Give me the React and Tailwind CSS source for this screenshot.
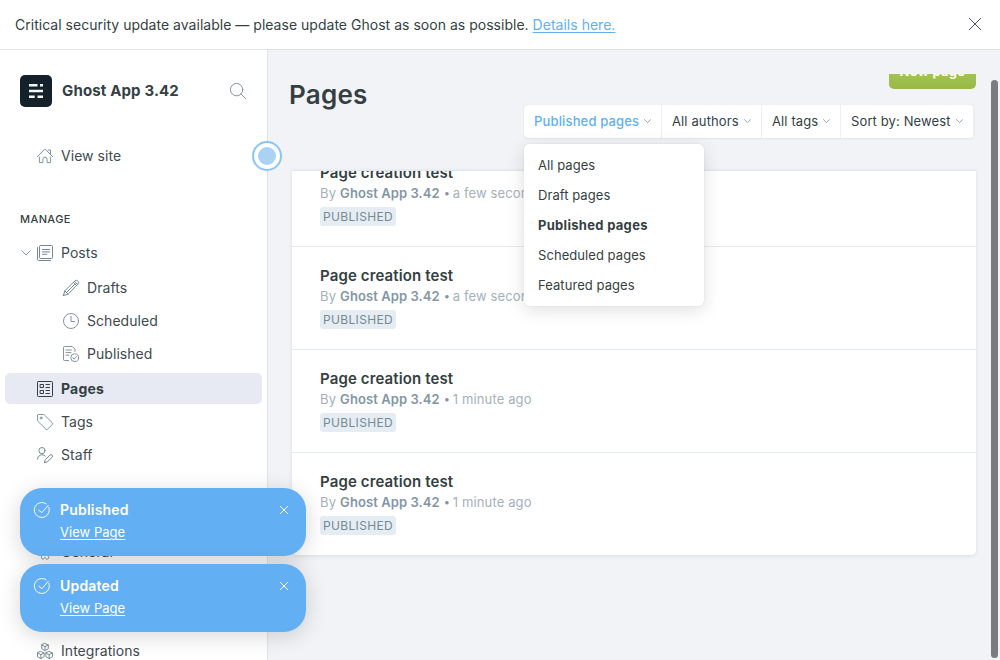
function Icon({ children, className = "", w = 0.9 }) {
  return (
    <svg
      viewBox="0 0 16 16"
      fill="none"
      stroke="currentColor"
      strokeWidth={w}
      strokeLinecap="round"
      strokeLinejoin="round"
      className={`size-4 shrink-0 overflow-visible ${className}`}
    >
      {children}
    </svg>
  );
}

const HomeIcon = () => (
  <Icon>
    <path d="M.4 8.7 7.3 1.6a1 1 0 0 1 1.4 0l6.9 7.1M11.2 2h2.3v4.4M2.4 9v5.6h3.5v-3.4a2.1 2.1 0 0 1 4.2 0v3.4h3.5V9" />
  </Icon>
);

const PostsIcon = () => (
  <Icon w={1}>
    <rect x="2.5" y=".5" width="13" height="13" rx="1" />
    <path d="M.5 2.5v12a1 1 0 0 0 1 1h12M5.5 4.5h7M5.5 6.9h7M5.5 9.3h4.4" />
  </Icon>
);

const PencilIcon = () => (
  <Icon w={1}>
    <path d="M.4 15.6l1.4-4.7L11.6 1.1a2.1 2.1 0 0 1 3.2 0 2.1 2.1 0 0 1 0 3.2L5.1 14.2.4 15.6ZM1.8 10.9l3.3 3.3M10.4 2.3l3.3 3.3M11.4 1.3l3.3 3.3M3.6 12.5l8.3-8.4" />
  </Icon>
);

const ClockIcon = () => (
  <Icon>
    <circle cx="8" cy="8" r="7.5" />
    <path d="M8 3.4V8.5h3.6" />
  </Icon>
);

const PublishedIcon = () => (
  <Icon>
    <path d="M5.6 14.5H1.5a1 1 0 0 1-1-1V1.5a1 1 0 0 1 1-1h7.8l2.6 2.6v2.4M3 4h5.4M3 6.6h5M3 9.2h3" />
    <circle cx="11.7" cy="11.7" r="3.9" />
    <path d="M13.4 10.5l-2.2 2.6-1.4-1.2" />
  </Icon>
);

const PagesIcon = () => (
  <Icon w={1}>
    <rect x=".5" y=".5" width="15" height="15" rx=".8" />
    <path d="M3.5 3.5h3v3h-3zM3.5 9.5h3v3h-3zM9 3.5h3.5M9 6.5h3.5M9 9.5h3.5M9 12.5h3.5" />
  </Icon>
);

const TagIcon = () => (
  <Icon>
    <path d="M.5 1.5v4.9a1.3 1.3 0 0 0 .4.9l8 7.9a1.2 1.2 0 0 0 1.7 0l4.7-4.7a1.2 1.2 0 0 0 0-1.7L7.3.9a1.3 1.3 0 0 0-.9-.4H1.5a1 1 0 0 0-1 1Z" />
    <circle cx="4" cy="4" r="1" />
  </Icon>
);

const StaffIcon = () => (
  <Icon w={1}>
    <circle cx="5" cy="3.6" r="3.1" />
    <path d="M.4 12.2A4.7 4.7 0 0 1 8.3 9M7.5 15.6l.7-2.8 4.8-4.7a1.45 1.45 0 0 1 2.1 2.1l-4.8 4.7-2.8.7Z" />
  </Icon>
);

const GearIcon = () => (
  <Icon>
    <circle cx="8" cy="8" r="2.6" />
    <path d="M6.6 1.6a1.5 1.5 0 0 1 2.8 0l.3 1a1.4 1.4 0 0 0 1.8.8l1-.3a1.5 1.5 0 0 1 1.5 2.2l-.5 1a1.4 1.4 0 0 0 .6 1.9l.8.4a1.4 1.4 0 0 1-.8 2.6l-1-.1a1.4 1.4 0 0 0-1.5 1.5l.1 1a1.5 1.5 0 0 1-2.7 1l-1-1.2-1 1.2a1.5 1.5 0 0 1-2.6-1l.1-1A1.4 1.4 0 0 0 3 11.1l-1 .1a1.4 1.4 0 0 1-.8-2.6L2 8.2a1.4 1.4 0 0 0 .6-1.9l-.5-1a1.5 1.5 0 0 1 1.5-2.2l1 .3a1.4 1.4 0 0 0 1.7-.8l.3-1Z" />
  </Icon>
);

const CUBE = "M0-3.5 3.3-2v3.8L0 3.5l-3.3-1.7V-2zM-3.3-2 0-.4 3.3-2M0-.4v3.9";
const IntegrationsIcon = () => (
  <Icon w={0.95}>
    <path d={CUBE} transform="translate(8 4)" />
    <path d={CUBE} transform="translate(3.8 12)" />
    <path d={CUBE} transform="translate(12.2 12)" />
  </Icon>
);

const Chevron = ({ className }) => (
  <svg viewBox="0 0 10 6" fill="none" stroke="currentColor" strokeLinecap="round" strokeLinejoin="round" className={className}>
    <path d="M.7.7 5 5 9.3.7" />
  </svg>
);

function NavItem({ icon, label, sub, active, open, className = "" }) {
  return (
    <a
      className={`mx-[5px] flex h-[31px] shrink-0 items-center rounded-[5px] text-sm ${
        sub ? "pl-[58px]" : open ? "pl-4" : "pl-8"
      } ${active ? "bg-[#e7eaf2] font-bold tracking-[0.18px] text-[#343f44]" : "tracking-[0.05px] text-[#404a4f]"} ${className}`}
    >
      {open && <Chevron className="mr-[6px] h-[6px] w-[10px] text-[#8b99a6]" />}
      <span className={`mr-2 ${active ? "text-[#343f44]" : "text-[#738a94]"}`}>{icon}</span>
      <span>{label}</span>
    </a>
  );
}

function Sidebar() {
  return (
    <nav className="flex w-[268px] shrink-0 flex-col overflow-hidden border-r border-[#dfe4ea] bg-white">
      <div className="mt-[25px] flex h-8 shrink-0 items-center pl-5 pr-[21px]">
        <div className="flex size-8 items-center justify-center rounded-[5px] bg-[#15212a]">
          <svg viewBox="0 0 14 14" fill="#f4f5f6" className="size-[14px]">
            <path d="M0 0h8.5v2.4H0zM11 0h3v2.4h-3zM0 5.8h14v2.4H0zM0 11.5h5.7v2.4H0zM8.5 11.5H14v2.4H8.5z" />
          </svg>
        </div>
        <span className="ml-[10px] grow text-[15px] font-bold tracking-[0.15px] text-[#343f44]">Ghost App 3.42</span>
        <Icon className="text-[#738a94]">
          <circle cx="6.6" cy="6.6" r="6.2" />
          <path d="M11 11l4.6 4.6" />
        </Icon>
      </div>
      <NavItem icon={<HomeIcon />} label="View site" className="mt-[33px]" />
      <div className="mt-10 h-4 shrink-0 pl-5 text-[11px]/4 font-medium tracking-[0.4px] text-[#343f44]">MANAGE</div>
      <NavItem icon={<PostsIcon />} label="Posts" open className="mt-[10px]" />
      <div className="mt-1 flex flex-col gap-[2px]">
        <NavItem icon={<PencilIcon />} label="Drafts" sub />
        <NavItem icon={<ClockIcon />} label="Scheduled" sub />
        <NavItem icon={<PublishedIcon />} label="Published" sub />
      </div>
      <div className="mt-1 flex flex-col gap-[2px]">
        <NavItem icon={<PagesIcon />} label="Pages" active />
        <NavItem icon={<TagIcon />} label="Tags" />
        <NavItem icon={<StaffIcon />} label="Staff" />
      </div>
      <NavItem icon={<GearIcon />} label="General" className="mt-[66px]" />
      <NavItem icon={<IntegrationsIcon />} label="Integrations" className="mt-[68px]" />
    </nav>
  );
}

const FILTERS = [
  { label: "Published pages", width: "w-[138px]", on: true },
  { label: "All authors", width: "w-[100px]" },
  { label: "All tags", width: "w-[79px]" },
  { label: "Sort by: Newest", width: "w-[133px]" },
];

const OPTIONS = ["All pages", "Draft pages", "Published pages", "Scheduled pages", "Featured pages"];

function Filters() {
  return (
    <div className="relative mr-[2px] mt-4 flex h-[33px] rounded-[4px] bg-white shadow-[0_0_1px_rgba(0,0,0,0.12),0_1px_2px_rgba(0,0,0,0.05)]">
      {FILTERS.map(({ label, width, on }) => (
        <div
          key={label}
          className={`flex items-center whitespace-nowrap border-r border-[#ecf0f3] pl-[10px] text-[13px] last:border-r-0 last:pl-[11px] ${width} ${
            on ? "font-medium tracking-[0.15px] text-[#5fb0f2]" : "tracking-[0.12px] text-[#343f44]"
          }`}
        >
          {label}
          <Chevron className="ml-[5px] h-[4.5px] w-[7px] text-[#8a98a3] [stroke-width:1.3px]" />
        </div>
      ))}
      <ul className="absolute left-0 top-[39px] z-10 flex h-[162px] w-[180px] flex-col rounded-[5px] bg-white pt-[6px] shadow-[0_0_1px_rgba(0,0,0,0.2),0_4px_18px_rgba(0,0,0,0.13)]">
        {OPTIONS.map((o) => (
          <li
            key={o}
            className={`h-[30px] pl-[14px] text-[13px]/[30px] text-[#343f44] ${
              o === "Published pages" ? "font-bold tracking-[0.3px]" : "tracking-[0.06px]"
            }`}
          >
            {o}
          </li>
        ))}
      </ul>
    </div>
  );
}

const ROWS = ["a few seconds ago", "a few seconds ago", "1 minute ago", "1 minute ago"];

function Row({ time }) {
  return (
    <li className="flex h-[103px] flex-col items-start border-b border-[#e3ebf1] bg-white pl-[28px] pt-[19px] last:border-b-0">
      <h3 className="text-[15px]/5 font-semibold tracking-[0.12px] text-[#343f44]">Page creation test</h3>
      <p className="flex h-5 gap-1 text-[13px]/5 tracking-[0.14px] text-[#a3b1bc]">
        <span>By</span>
        <span className="font-semibold tracking-[0.08px] text-[#8496a3]">Ghost App 3.42</span>
        <span className="w-[5px] text-center text-[11px]/5 text-[#8496a3]">•</span>
        <span>{time}</span>
      </p>
      <span className="mt-1 h-[19px] rounded-[3px] bg-[#e5edf3] px-[3px] text-xs/[19px] tracking-[0.34px] text-[#738a94]">
        PUBLISHED
      </span>
    </li>
  );
}

function Toast({ title }) {
  return (
    <div className="flex h-[68px] rounded-[22px] bg-[#62b0f3] pl-[14px] pr-[18px] text-white shadow-[0_4px_22px_rgba(0,0,0,0.16)]">
      <Icon className="mt-[14px]" w={0.95}>
        <path d="M14.9 5.3A7.5 7.5 0 1 1 12.2 1.8" />
        <path d="M14.2 3.4l-6.3 7.3-3.2-2.6" />
      </Icon>
      <div className="ml-[10px] grow pt-[12px]">
        <div className="text-sm/5 font-semibold tracking-[0.2px]">{title}</div>
        <a className="mt-[2px] block text-[13px]/5 tracking-[0.03px] underline underline-offset-2">View Page</a>
      </div>
      <svg viewBox="0 0 8 8" stroke="currentColor" strokeWidth="1" strokeLinecap="round" className="mt-[18px] size-2 overflow-visible">
        <path d="M.2.2l7.6 7.6M7.8.2.2 7.8" />
      </svg>
    </div>
  );
}

export default function App() {
  return (
    <div className="relative flex h-[660px] w-[1000px] flex-col overflow-hidden bg-[#f2f3f7] font-[Inter,sans-serif] text-[#343f44] antialiased">
      <header className="flex h-[50px] shrink-0 items-center justify-between border-b border-[#dfe3e6] bg-white pl-[15px] pr-[19px] text-sm tracking-[0.02px]">
        <p>
          Critical security update available — please update Ghost as soon as possible.{" "}
          <a className="text-[#62b0f3] underline underline-offset-2">Details here.</a>
        </p>
        <svg viewBox="0 0 12 12" stroke="#4a5560" strokeWidth="1" strokeLinecap="round" className="-mt-px size-3">
          <path d="M.2.2l11.6 11.6M11.8.2.2 11.8" />
        </svg>
      </header>
      <div className="flex min-h-0 grow">
        <Sidebar />
        <main className="flex grow flex-col pl-6 pr-[24px]">
          <div className="-ml-[3px] flex h-[120px] shrink-0 items-start justify-between">
            <h1 className="mt-[27px] text-[26px]/9 font-semibold tracking-[0.25px]">Pages</h1>
            <div className="flex flex-col items-end pt-6">
              <div className="h-[15px] overflow-hidden">
                <button className="-mt-[19px] block h-[34px] w-[87px] rounded-[5px] bg-linear-to-b from-[#afcf63] to-[#98b944] text-[13px] font-bold tracking-[0.3px] text-white">
                  New page
                </button>
              </div>
              <Filters />
            </div>
          </div>
          <section className="h-[385px] shrink-0 overflow-hidden rounded-b-[5px] border-t border-[#dce8ee] shadow-[0_1px_4px_rgba(0,0,0,0.09)]">
            <ul className="-mt-[27px]">
              {ROWS.map((time, i) => (
                <Row key={i} time={time} />
              ))}
            </ul>
          </section>
        </main>
      </div>
      <div className="absolute left-[252px] top-[141px] flex size-[30px] items-center justify-center rounded-full border-2 border-[#8bc5f5] bg-white">
        <div className="size-[18px] rounded-full bg-[#a9d2f5]" />
      </div>
      <div className="absolute left-5 top-[488px] flex w-[286px] flex-col gap-2">
        <Toast title="Published" />
        <Toast title="Updated" />
      </div>
      <div className="absolute right-[2px] top-20 h-[578px] w-[7px] rounded-full bg-[#7b7c7e]" />
    </div>
  );
}
